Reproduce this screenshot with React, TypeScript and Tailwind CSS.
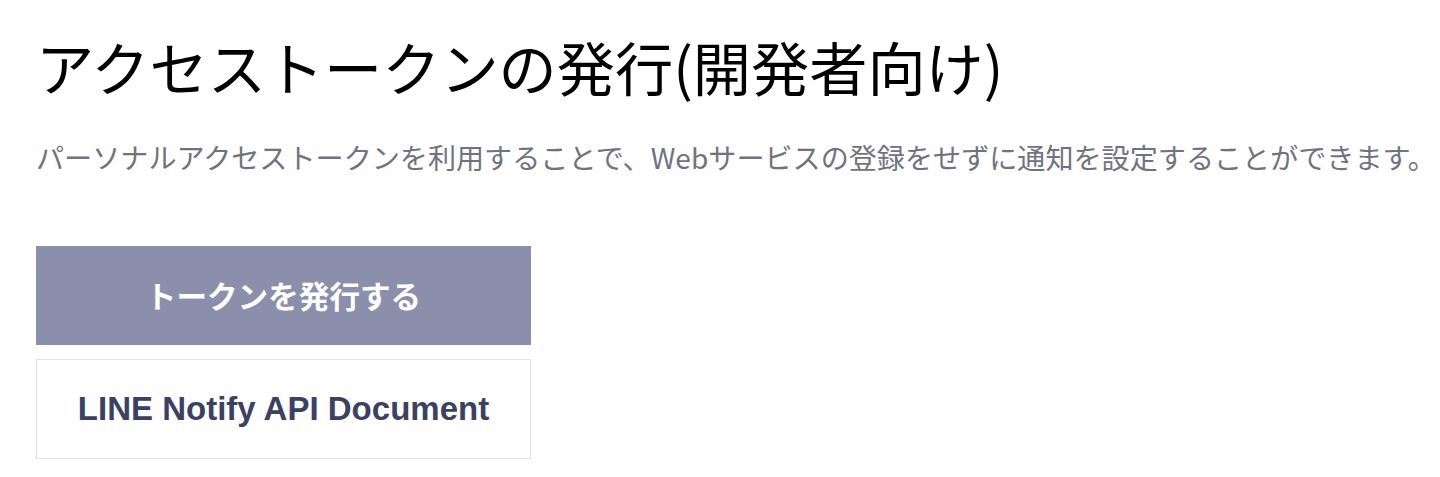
const jp = "font-['Meiryo','Noto_Sans_CJK_JP',sans-serif]";

export default function App() {
  return (
    <div className={`${jp} min-h-screen bg-white px-[36px] pt-[22px]`}>
      <h1 className="text-[58.2px] leading-[88px] font-normal whitespace-nowrap text-black">
        アクセストークンの発行(開発者向け)
      </h1>
      <p className="mt-[27px] text-[28.1px] leading-[40px] whitespace-nowrap text-[#70737f]">
        パーソナルアクセストークンを利用することで、Webサービスの登録をせずに通知を設定することができます。
      </p>

      <div className="mt-[69px] flex w-[495px] flex-col gap-[14px]">
        <button className="flex h-[99px] items-center justify-center bg-[#8c8fab] text-[30.6px] font-bold text-white">
          トークンを発行する
        </button>
        <a
          href="#"
          className="flex h-[100px] items-center justify-center border border-[#e3e3e3] bg-white font-['Liberation_Sans',Arial,sans-serif] text-[33px] font-bold text-[#3c4161]"
        >
          LINE Notify API Document
        </a>
      </div>
    </div>
  );
}
